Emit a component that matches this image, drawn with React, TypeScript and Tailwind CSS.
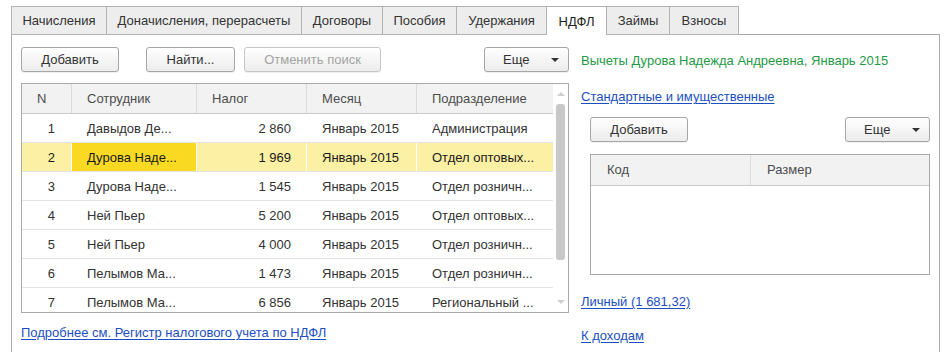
type Row = {
  n: number;
  name: string;
  tax: string;
  month: string;
  dept: string;
};

const TABS: Array<{ label: string; w: string; active?: boolean }> = [
  { label: "Начисления", w: "w-[95px]" },
  { label: "Доначисления, перерасчеты", w: "w-[195px]" },
  { label: "Договоры", w: "w-[81px]" },
  { label: "Пособия", w: "w-[74px]" },
  { label: "Удержания", w: "w-[90px]" },
  { label: "НДФЛ", w: "w-[60px]", active: true },
  { label: "Займы", w: "w-[63px]" },
  { label: "Взносы", w: "w-[70px]" },
];

const ROWS: Row[] = [
  { n: 1, name: "Давыдов Де...", tax: "2 860", month: "Январь 2015", dept: "Администрация" },
  { n: 2, name: "Дурова Наде...", tax: "1 969", month: "Январь 2015", dept: "Отдел оптовых..." },
  { n: 3, name: "Дурова Наде...", tax: "1 545", month: "Январь 2015", dept: "Отдел розничн..." },
  { n: 4, name: "Ней Пьер", tax: "5 200", month: "Январь 2015", dept: "Отдел оптовых..." },
  { n: 5, name: "Ней Пьер", tax: "4 000", month: "Январь 2015", dept: "Отдел розничн..." },
  { n: 6, name: "Пелымов Ма...", tax: "1 473", month: "Январь 2015", dept: "Отдел розничн..." },
  { n: 7, name: "Пелымов Ма...", tax: "6 856", month: "Январь 2015", dept: "Региональный ..." },
];

const SELECTED = 2;

function Btn({
  children,
  w,
  disabled,
  more,
  className = "",
}: {
  children: React.ReactNode;
  w: string;
  disabled?: boolean;
  more?: boolean;
  className?: string;
}) {
  return (
    <div
      className={`${w} ${className} flex h-[25px] items-center rounded-[3px] border bg-gradient-to-b from-white to-[#ececec] shadow-[0_1px_0_rgba(0,0,0,0.06)] ${
        disabled ? "border-[#c6c6c6] text-[#a3a3a3]" : "border-[#a6a6a6] text-[#333]"
      } ${more ? "justify-between pl-[18px] pr-[9px]" : "justify-center"}`}
    >
      <span>{children}</span>
      {more ? (
        <span className="h-0 w-0 border-x-[4px] border-t-[4px] border-x-transparent border-t-[#333]" />
      ) : null}
    </div>
  );
}

function Link({ children, className = "" }: { children: React.ReactNode; className?: string }) {
  return (
    <div className={`leading-[16px] text-[#1c4fc2] underline underline-offset-2 ${className}`}>
      {children}
    </div>
  );
}

export default function App() {
  return (
    <div className="h-[352px] w-[950px] overflow-hidden bg-white font-['Liberation_Sans',Arial,sans-serif] text-[13px] text-[#333]">
      <div className="ml-[11px] w-[929px] pt-[6px]">
        {/* tabs */}
        <div className="flex h-[29px]">
          {TABS.map((t, i) => (
            <div
              key={t.label}
              className={`${t.w} flex items-center justify-center border-l border-t border-[#b3b3b3] pt-[1px] ${
                i === TABS.length - 1 ? "border-r" : ""
              } ${t.active ? "bg-white text-[#222]" : "border-b bg-[#ededed] text-[#333]"}`}
            >
              {t.label}
            </div>
          ))}
          <div className="flex-1 border-b border-[#a9a9a9]" />
        </div>

        {/* panel */}
        <div className="flex h-[317px] border-x border-[#a9a9a9]">
          {/* left */}
          <div className="ml-[9px] w-[548px] pt-[12px]">
            <div className="flex">
              <Btn w="w-[98px]">Добавить</Btn>
              <Btn w="w-[89px]" className="ml-[27px]">
                Найти...
              </Btn>
              <Btn w="w-[137px]" className="ml-[9px]" disabled>
                Отменить поиск
              </Btn>
              <Btn w="w-[85px]" className="ml-auto" more>
                Еще
              </Btn>
            </div>

            <div className="mt-[11px] flex h-[230px] border border-[#a9a9a9]">
              <div className="flex-1 overflow-hidden">
                <div className="flex h-[30px] border-b border-[#c9c9c9] bg-[#f2f2f2] text-[#4d4d4d]">
                  <div className="flex w-[50px] items-center border-r border-[#dcdcdc] pl-[15px]">N</div>
                  <div className="flex w-[125px] items-center border-r border-[#dcdcdc] pl-[15px]">Сотрудник</div>
                  <div className="flex w-[110px] items-center border-r border-[#dcdcdc] pl-[15px]">Налог</div>
                  <div className="flex w-[110px] items-center border-r border-[#dcdcdc] pl-[15px]">Месяц</div>
                  <div className="flex flex-1 items-center pl-[15px]">Подразделение</div>
                </div>
                {ROWS.map((r) => {
                  const sel = r.n === SELECTED;
                  return (
                    <div
                      key={r.n}
                      className={`flex h-[29px] border-b border-[#e3e3e3] ${
                        sel ? "bg-[#fbf0a4] text-[#1a1a1a]" : ""
                      }`}
                    >
                      <div className="flex w-[50px] items-center justify-end border-r border-white pr-[16px] pt-[2px]">
                        {r.n}
                      </div>
                      <div
                        className={`flex w-[125px] items-center border-r border-white pl-[15px] pt-[2px] ${
                          sel ? "bg-[#f9d922]" : ""
                        }`}
                      >
                        {r.name}
                      </div>
                      <div className="flex w-[110px] items-center justify-end border-r border-white pr-[15px] pt-[2px]">
                        {r.tax}
                      </div>
                      <div className="flex w-[110px] items-center border-r border-white pl-[15px] pt-[2px]">
                        {r.month}
                      </div>
                      <div className="flex flex-1 items-center whitespace-nowrap pl-[15px] pt-[2px]">{r.dept}</div>
                    </div>
                  );
                })}
              </div>
              {/* scrollbar */}
              <div className="flex w-[15px] flex-col items-center">
                <div className="mt-[8px] h-0 w-0 border-x-[4px] border-b-[4px] border-x-transparent border-b-[#cfcfcf]" />
                <div className="mt-[8px] h-[156px] w-[9px] rounded-[3px] bg-[#c8c8c8]" />
                <div className="mt-[40px] h-0 w-0 border-x-[4px] border-t-[4px] border-x-transparent border-t-[#cfcfcf]" />
              </div>
            </div>

            <Link className="mt-[12px]">Подробнее см. Регистр налогового учета по НДФЛ</Link>
          </div>

          {/* right */}
          <div className="ml-[12px] w-[349px] pt-[18px]">
            <div className="leading-[16px] text-[#1e9a45]">
              Вычеты Дурова Надежда Андреевна, Январь 2015
            </div>
            <Link className="mt-[20px]">Стандартные и имущественные</Link>

            <div className="ml-[9px] mt-[12px] flex w-[340px] justify-between">
              <Btn w="w-[98px]">Добавить</Btn>
              <Btn w="w-[85px]" more>
                Еще
              </Btn>
            </div>

            <div className="ml-[9px] mt-[12px] h-[121px] w-[340px] border border-[#a9a9a9]">
              <div className="flex h-[31px] border-b border-[#c9c9c9] bg-[#f2f2f2] text-[#4d4d4d]">
                <div className="flex w-[160px] items-center border-r border-[#dcdcdc] pl-[16px]">Код</div>
                <div className="flex flex-1 items-center pl-[16px]">Размер</div>
              </div>
            </div>

            <Link className="mt-[19px]">Личный (1 681,32)</Link>
            <Link className="mt-[18px]">К доходам</Link>
          </div>
        </div>
      </div>
    </div>
  );
}
